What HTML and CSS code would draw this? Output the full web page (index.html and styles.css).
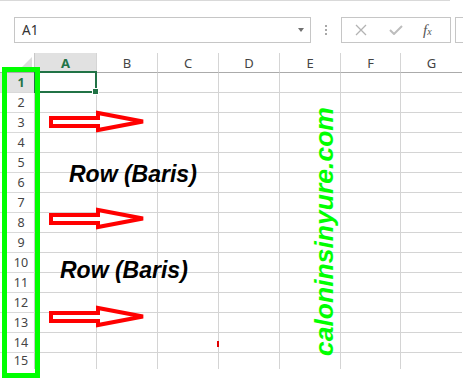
FILE: index.html
```html
<!DOCTYPE html>
<html lang="en">
<head>
    <meta charset="UTF-8">
    <meta name="viewport" content="width=device-width, initial-scale=1.0">
    <title>Row (Baris)</title>
    <link rel="stylesheet" href="styles.css">
</head>
<body>

    <div class="topline"></div>

    <div class="formula-bar">
        <div class="name-box">
            <span class="cell-ref">A1</span>
            <span class="caret"></span>
        </div>
        <div class="grip"><i></i><i></i><i></i></div>
        <div class="fx-buttons">
            <svg class="btn-icon" width="12" height="12" viewBox="0 0 12 12">
                <path d="M1 1 L11 11 M11 1 L1 11" stroke="#b3b3b3" stroke-width="1.3" fill="none"/>
            </svg>
            <svg class="btn-icon" width="14" height="10" viewBox="0 0 14 10">
                <path d="M1 5 L5 9 L13 1" stroke="#bdbdbd" stroke-width="2" fill="none"/>
            </svg>
            <span class="fx">f<small>x</small></span>
        </div>
        <div class="formula-input"></div>
    </div>

    <div class="sheet">
        <div class="grid">
            <!-- header row -->
            <div class="corner">
                <svg width="13" height="13" viewBox="0 0 13 13"><path d="M13 0 L13 13 L0 13 Z" fill="#dcdcdc"/></svg>
            </div>
            <div class="col-head active">A</div>
            <div class="col-head">B</div>
            <div class="col-head">C</div>
            <div class="col-head">D</div>
            <div class="col-head">E</div>
            <div class="col-head">F</div>
            <div class="col-head last">G</div>

            <div class="row-head active">1</div>
            <div class="cell selected"><div class="sel"><span class="handle"></span></div></div>
            <div class="cell"></div><div class="cell"></div><div class="cell"></div><div class="cell"></div><div class="cell"></div><div class="cell last"></div>

            <div class="row-head">2</div>
            <div class="cell"></div><div class="cell"></div><div class="cell"></div><div class="cell"></div><div class="cell"></div><div class="cell"></div><div class="cell last"></div>
            <div class="row-head">3</div>
            <div class="cell"></div><div class="cell"></div><div class="cell"></div><div class="cell"></div><div class="cell"></div><div class="cell"></div><div class="cell last"></div>
            <div class="row-head">4</div>
            <div class="cell"></div><div class="cell"></div><div class="cell"></div><div class="cell"></div><div class="cell"></div><div class="cell"></div><div class="cell last"></div>
            <div class="row-head">5</div>
            <div class="cell"></div><div class="cell"></div><div class="cell"></div><div class="cell"></div><div class="cell"></div><div class="cell"></div><div class="cell last"></div>
            <div class="row-head">6</div>
            <div class="cell"></div><div class="cell"></div><div class="cell"></div><div class="cell"></div><div class="cell"></div><div class="cell"></div><div class="cell last"></div>
            <div class="row-head">7</div>
            <div class="cell"></div><div class="cell"></div><div class="cell"></div><div class="cell"></div><div class="cell"></div><div class="cell"></div><div class="cell last"></div>
            <div class="row-head">8</div>
            <div class="cell"></div><div class="cell"></div><div class="cell"></div><div class="cell"></div><div class="cell"></div><div class="cell"></div><div class="cell last"></div>
            <div class="row-head">9</div>
            <div class="cell"></div><div class="cell"></div><div class="cell"></div><div class="cell"></div><div class="cell"></div><div class="cell"></div><div class="cell last"></div>
            <div class="row-head">10</div>
            <div class="cell"></div><div class="cell"></div><div class="cell"></div><div class="cell"></div><div class="cell"></div><div class="cell"></div><div class="cell last"></div>
            <div class="row-head">11</div>
            <div class="cell"></div><div class="cell"></div><div class="cell"></div><div class="cell"></div><div class="cell"></div><div class="cell"></div><div class="cell last"></div>
            <div class="row-head">12</div>
            <div class="cell"></div><div class="cell"></div><div class="cell"></div><div class="cell"></div><div class="cell"></div><div class="cell"></div><div class="cell last"></div>
            <div class="row-head">13</div>
            <div class="cell"></div><div class="cell"></div><div class="cell"></div><div class="cell"></div><div class="cell"></div><div class="cell"></div><div class="cell last"></div>
            <div class="row-head">14</div>
            <div class="cell"></div><div class="cell"></div><div class="cell"></div><div class="cell"></div><div class="cell"></div><div class="cell"></div><div class="cell last"></div>
            <div class="row-head end">15</div>
            <div class="cell end"></div><div class="cell end"></div><div class="cell end"></div><div class="cell end"></div><div class="cell end"></div><div class="cell end"></div><div class="cell end last"></div>
        </div>

        <!-- drawn annotations on top of the sheet -->
        <div class="row-box"></div>

        <svg class="arrow arrow-1" width="100" height="26" viewBox="0 0 100 26">
            <polygon points="3,9 50,9 50,4 95,12.5 50,21 50,17 3,17" />
        </svg>
        <svg class="arrow arrow-2" width="100" height="26" viewBox="0 0 100 26">
            <polygon points="3,9 50,9 50,4 95,12.5 50,21 50,17 3,17" />
        </svg>
        <svg class="arrow arrow-3" width="100" height="26" viewBox="0 0 100 26">
            <polygon points="3,9 50,9 50,4 95,12.5 50,21 50,17 3,17" />
        </svg>

        <span class="label label-1">Row (Baris)</span>
        <span class="label label-2">Row (Baris)</span>

        <span class="watermark">caloninsinyure.com</span>
        <span class="speck"></span>
    </div>

</body>
</html>
```

FILE: styles.css
```css
body {
    margin: 0;
    width: 463px;
    height: 385px;
    overflow: hidden;
    background: white;
    font-family: "Noto Sans", "DejaVu Sans", sans-serif;
    color: #444;
}
.topline {
    width: 450px;
    height: 1px;
    background: #d9d9d9;
}

/* formula bar */
.formula-bar {
    display: flex;
    height: 26px;
    margin-top: 16px;
    padding-left: 14px;
    overflow: hidden;
}
.name-box {
    box-sizing: border-box;
    width: 297px;
    height: 26px;
    border: 1px solid #c6c6c6;
    display: flex;
    align-items: center;
    justify-content: space-between;
    padding: 0 6px 0 7px;
    flex-shrink: 0;
}
.cell-ref {
    font-size: 13.5px;
    color: #333;
}
.caret {
    width: 0;
    height: 0;
    border-left: 3.5px solid transparent;
    border-right: 3.5px solid transparent;
    border-top: 4px solid #707070;
}
.grip {
    width: 30px;
    flex-shrink: 0;
    display: flex;
    flex-direction: column;
    align-items: center;
    justify-content: center;
    gap: 2px;
}
.grip i {
    display: block;
    width: 2px;
    height: 2px;
    background: #a8a8a8;
}
.fx-buttons {
    box-sizing: border-box;
    width: 110px;
    height: 26px;
    flex-shrink: 0;
    border: 1px solid #c6c6c6;
    display: flex;
    align-items: center;
    padding-left: 13px;
    gap: 22px;
}
.fx {
    font-family: "Liberation Serif", serif;
    font-style: italic;
    font-size: 15px;
    color: #555;
    margin-left: -2px;
}
.fx small {
    font-size: 10px;
}
.formula-input {
    box-sizing: border-box;
    width: 40px;
    height: 26px;
    flex-shrink: 0;
    margin-left: 4px;
    border: 1px solid #c6c6c6;
}

/* sheet */
.sheet {
    position: relative;
    margin-top: 10px;
}
.grid {
    display: grid;
    grid-template-columns: 35px 62px 61px 61px 61px 61px 60px 61px;
    grid-template-rows: repeat(15, 20px) 16px;
}
.grid > div {
    box-sizing: border-box;
}
.corner {
    border-right: 1px solid #c8c8c8;
    border-bottom: 1px solid #ababab;
    display: flex;
    align-items: flex-end;
    justify-content: flex-end;
    padding: 0 2px 2px 0;
}
.corner svg {
    display: block;
}
.col-head {
    border-right: 1px solid #d5d5d5;
    border-bottom: 1px solid #ababab;
    display: flex;
    align-items: center;
    justify-content: center;
    font-size: 13px;
}
.col-head.active {
    background: #e1e1e1;
    color: #217346;
    font-weight: bold;
}
.row-head {
    border-right: 1px solid #c8c8c8;
    border-bottom: 1px solid #d9d9d9;
    display: flex;
    align-items: center;
    justify-content: center;
    padding-left: 8px;
    font-size: 12.5px;
}
.row-head.active {
    background: #e1e1e1;
    color: #217346;
    font-weight: bold;
}
.row-head.end {
    align-items: flex-start;
    padding-top: 1px;
    line-height: 14px;
}
.cell {
    border-right: 1px solid #d4d4d4;
    border-bottom: 1px solid #d4d4d4;
}
.grid > .end {
    border-bottom: none;
}
.last {
    border-right: none;
}
.cell.selected {
    position: relative;
}
.sel {
    position: absolute;
    left: -1px;
    top: -2px;
    right: -1px;
    bottom: -1px;
    border: 2px solid #217346;
}
.handle {
    position: absolute;
    right: -4px;
    bottom: -4px;
    width: 5px;
    height: 5px;
    background: #217346;
    border: 1px solid white;
}

/* annotations */
.row-box {
    position: absolute;
    left: 2px;
    top: 14px;
    width: 38px;
    height: 311px;
    box-sizing: border-box;
    border: 5px solid #00ff00;
}
.arrow {
    position: absolute;
    left: 48px;
}
.arrow polygon {
    fill: white;
    stroke: #ff0000;
    stroke-width: 4;
    stroke-linejoin: miter;
}
.arrow-1 { top: 56px; }
.arrow-2 { top: 153px; }
.arrow-3 { top: 251px; }

.label {
    position: absolute;
    font-family: "Liberation Sans", Arial, sans-serif;
    font-weight: bold;
    font-style: italic;
    font-size: 23px;
    line-height: 23px;
    color: #000;
    white-space: nowrap;
}
.label-1 { left: 69px; top: 110px; }
.label-2 { left: 60px; top: 206px; }

.watermark {
    position: absolute;
    left: 311px;
    top: 303px;
    transform: rotate(-90deg);
    transform-origin: left top;
    font-family: "Liberation Sans", Arial, sans-serif;
    font-weight: bold;
    font-style: italic;
    font-size: 26.5px;
    line-height: 26.5px;
    color: #00ff00;
    white-space: nowrap;
}
.speck {
    position: absolute;
    left: 217px;
    top: 288px;
    width: 2px;
    height: 6px;
    background: #e00000;
}
```
